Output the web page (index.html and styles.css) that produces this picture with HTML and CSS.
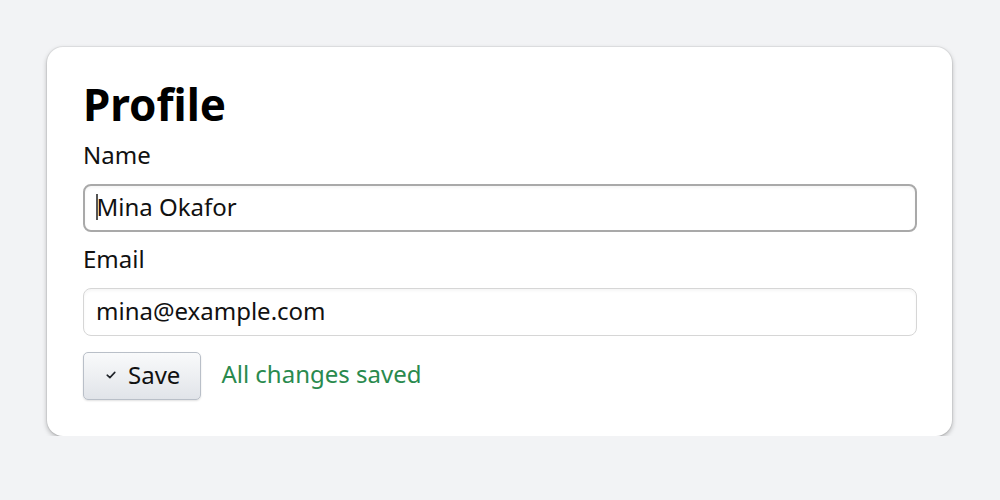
FILE: index.html
```html
<!DOCTYPE html>
<html lang="en">
<head>
<meta charset="utf-8">
<title>Profile</title>
<link rel="stylesheet" href="styles.css">
</head>
<body>
<main class="page">
  <form class="card">
    <h1 class="title">Profile</h1>
    <label class="label" for="name">Name</label>
    <div class="field">
      <input class="input input-focus" id="name" type="text" value="Mina Okafor">
      <span class="caret"></span>
    </div>
    <label class="label" for="email">Email</label>
    <div class="field">
      <input class="input" id="email" type="email" value="mina@example.com">
    </div>
    <div class="actions">
      <button class="btn" type="button">
        <svg class="check" width="10" height="8" viewBox="0 0 10 8" aria-hidden="true"><path d="M1.2 4.2 L3.9 6.6 L8.8 1.4" fill="none" stroke="#1f2328" stroke-width="1.6" stroke-linecap="round" stroke-linejoin="round"/></svg>
        <span>Save</span>
      </button>
      <span class="status">All changes saved</span>
    </div>
  </form>
</main>
</body>
</html>
```
FILE: styles.css
```css
html, body {
  margin: 0;
  padding: 0;
  background: #f2f3f5;
}
body {
  font-family: "Noto Sans", "Open Sans", sans-serif;
  font-size: 24px;
  color: #111;
}
.page {
  padding: 47px 48px 0 47px;
}
.card {
  display: flex;
  flex-direction: column;
  background: #fff;
  border-radius: 16px;
  padding: 27px 35px 36px 36px;
  box-shadow: 0 0 0 1px rgba(0, 0, 0, 0.05), 0 2px 5px rgba(0, 0, 0, 0.28);
}
.title {
  margin: 0 0 6px;
  font-size: 44px;
  font-weight: 700;
  line-height: 60px;
  color: #000;
}
.label {
  display: block;
  line-height: 30px;
  margin-bottom: 14px;
}
.field {
  position: relative;
  margin-bottom: 12px;
}
.input {
  display: block;
  box-sizing: border-box;
  width: 100%;
  height: 48px;
  margin: 0;
  padding: 0 12px 3px;
  font: inherit;
  color: #111;
  background: #fff;
  border: 1.5px solid #d6d6d6;
  border-radius: 8px;
  box-shadow: inset 0 2px 3px rgba(0, 0, 0, 0.04);
  outline: none;
}
.input-focus {
  border: 2px solid #a9a9a9;
  padding: 0 11.5px 3px;
}
.caret {
  position: absolute;
  left: 13px;
  top: 10px;
  width: 2px;
  height: 26px;
  background: #555;
}
.actions {
  display: flex;
  align-items: center;
  gap: 20px;
  margin-top: 4px;
}
.btn {
  display: flex;
  align-items: center;
  gap: 12px;
  box-sizing: border-box;
  height: 48px;
  padding: 0 20px 4px 22px;
  font: inherit;
  color: #111;
  background: linear-gradient(#f9fafb, #e1e4e9);
  border: 1.5px solid #b9bfc8;
  border-radius: 5px;
  box-shadow: 0 1px 2px rgba(0, 0, 0, 0.12);
}
.check {
  display: block;
  margin-top: 2px;
}
.status {
  color: #2a8a4e;
  margin-bottom: 5px;
}
```
